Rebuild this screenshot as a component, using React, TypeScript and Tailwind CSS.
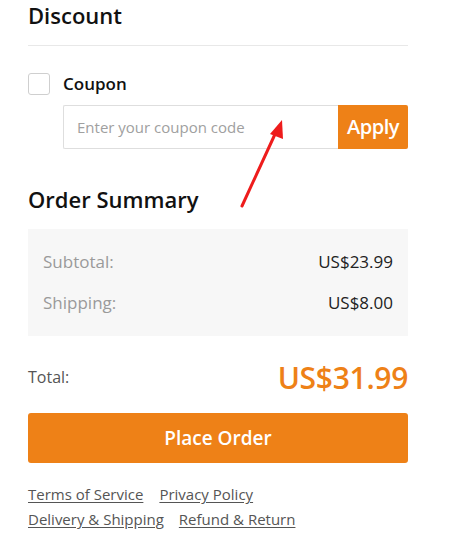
import React from "react";

const font = { fontFamily: '"Open Sans", "Noto Sans", Arial, sans-serif' };

export default function App() {
  return (
    <div className="relative w-[465px] h-[541px] bg-white overflow-hidden" style={font}>
      <div className="ml-[28px] w-[380px]">
        {/* Discount */}
        <h2 className="text-[22px] leading-[30px] font-semibold text-[#111] pb-[15px] border-b border-[#e8e8e8]">
          Discount
        </h2>

        <div className="mt-[27px] flex items-center gap-[13px]">
          <span className="block w-[22px] h-[22px] rounded-[3px] border border-[#cfcfcf] bg-white" />
          <span className="text-[17px] leading-[22px] font-semibold text-[#111]">Coupon</span>
        </div>

        <div className="mt-[10px] ml-[35px] flex h-[44px]">
          <input
            className="flex-1 min-w-0 h-full border border-r-0 border-[#dedede] rounded-l-[2px] px-[13px] text-[15px] text-[#333] placeholder:text-[#a0a0a0] outline-none"
            placeholder="Enter your coupon code"
          />
          <button className="w-[70px] h-full bg-[#ee8117] text-white text-[20px] font-semibold rounded-r-[2px] tracking-[-0.5px]">
            Apply
          </button>
        </div>

        {/* Order Summary */}
        <h2 className="mt-[35px] text-[22px] leading-[30px] font-semibold text-[#111]">Order Summary</h2>

        <div className="mt-[15px] bg-[#f7f7f7] px-[15px] py-[21px] flex flex-col gap-[17px]">
          <div className="flex justify-between text-[17px] leading-[24px]">
            <span className="text-[#9a9a9a]">Subtotal:</span>
            <span className="text-[#222]">US$23.99</span>
          </div>
          <div className="flex justify-between text-[17px] leading-[24px]">
            <span className="text-[#9a9a9a]">Shipping:</span>
            <span className="text-[#222]">US$8.00</span>
          </div>
        </div>

        <div className="mt-[21px] flex items-center justify-between h-[40px]">
          <span className="text-[16px] text-[#555]">Total:</span>
          <span className="text-[30px] font-semibold text-[#ee8117] tracking-[-0.3px]">US$31.99</span>
        </div>

        <button className="mt-[16px] w-full h-[50px] rounded-[3px] bg-[#ee8117] text-white text-[19px] font-semibold">
          Place Order
        </button>

        <div className="mt-[20px] flex flex-col gap-[3px] text-[15px] leading-[22px] text-[#555]">
          <div className="flex gap-[16px]">
            <a className="underline underline-offset-2">Terms of Service</a>
            <a className="underline underline-offset-2">Privacy Policy</a>
          </div>
          <div className="flex gap-[15px]">
            <a className="underline underline-offset-2">Delivery &amp; Shipping</a>
            <a className="underline underline-offset-2">Refund &amp; Return</a>
          </div>
        </div>
      </div>

      {/* annotation arrow */}
      <svg className="absolute left-0 top-0 pointer-events-none" width="465" height="541">
        <line x1="242" y1="206" x2="276" y2="132" stroke="#ee1c1c" strokeWidth="3" strokeLinecap="round" />
        <polygon points="282,120 270,134 283,139" fill="#ee1c1c" />
      </svg>
    </div>
  );
}
